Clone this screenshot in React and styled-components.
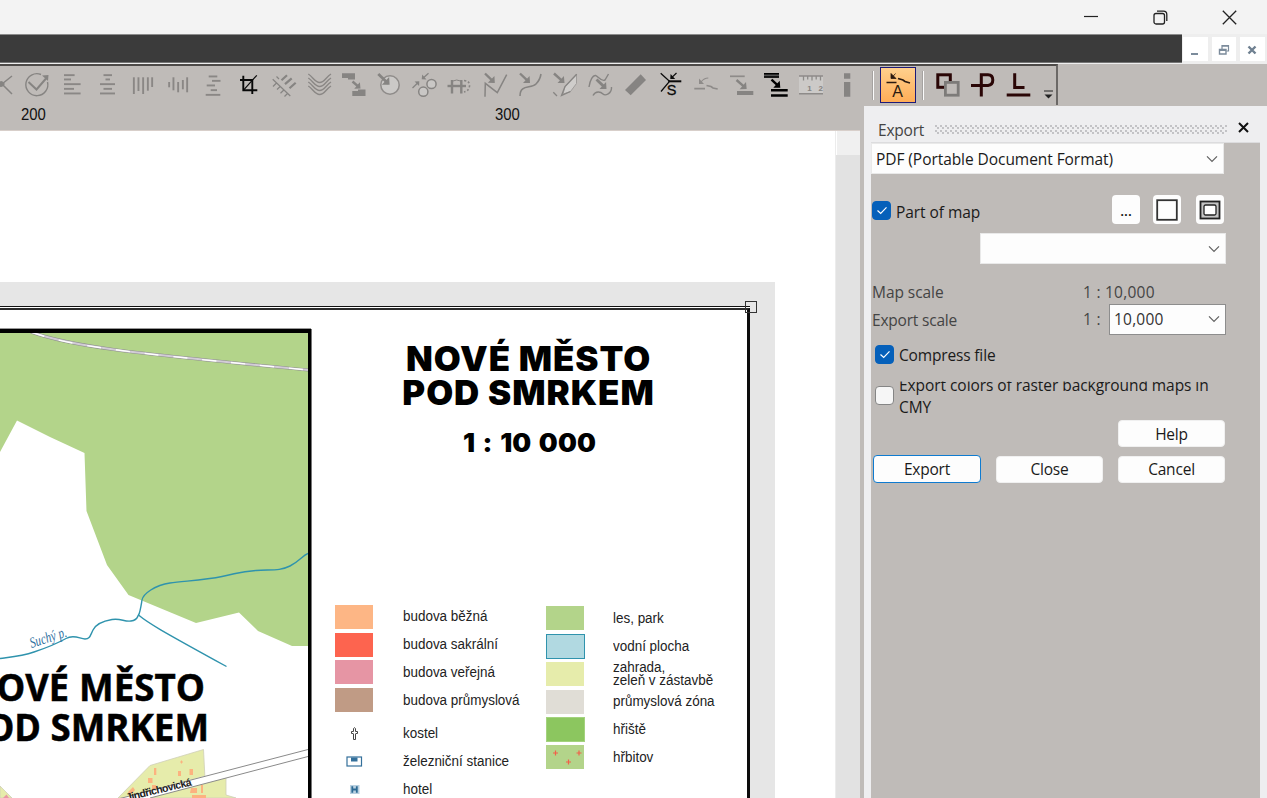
import React from "react";
import styled, { createGlobalStyle, css } from "styled-components";

const GRAY = "#bfbbb8";
const LIGHT = "#eeeef0";
const DIM = "#868482";

const Global = createGlobalStyle`
  * { box-sizing: border-box; }
  body { margin: 0; overflow: hidden; font-family: "Open Sans", "Noto Sans", sans-serif; }
`;

const Window = styled.div`
  width: 1267px;
  height: 798px;
  display: flex;
  flex-direction: column;
  overflow: hidden;
  background: ${GRAY};
`;

/* ---------- title bar ---------- */
const TitleBar = styled.header`
  height: 34px;
  flex: none;
  display: flex;
  justify-content: flex-end;
  align-items: center;
  padding-right: 3.5px;
  background: #f3f3f3;
`;
const CaptionButton = styled.span`
  width: 69px;
  height: 34px;
  display: flex;
  align-items: center;
  justify-content: center;
`;

const MenuStrip = styled.div`
  height: 30px;
  flex: none;
  display: flex;
  background: #eeeeee;
`;
const MenuDark = styled.div`
  width: 1182px;
  height: 29px;
  border-top: 1px solid #8b8b8b;
  border-bottom: 1px solid #757575;
  background: #3b3b3b;
`;
const ChildButtons = styled.div`
  display: flex;
  gap: 4px;
  padding: 3px 0 0 1px;
`;
const ChildButton = styled.span`
  width: 24.5px;
  height: 24px;
  display: flex;
  align-items: center;
  justify-content: center;
  padding-top: 2px;
  background: #fff;
`;

/* ---------- toolbar ---------- */
const ToolBar = styled.div`
  width: 1058px;
  height: 41px;
  flex: none;
  display: flex;
  border-top: 2px solid #4d4a48;
  border-right: 2px solid #6b6866;
  overflow: hidden;
`;
const Tools = styled.div`
  width: 866px;
  flex: none;
  display: flex;
  margin-left: -15.6px;
  padding-top: 6px;
`;
const Tool = styled.span`
  width: 35.2px;
  flex: none;
  display: flex;
  justify-content: center;
`;
const EditTools = styled.div`
  display: flex;
  flex: none;
  padding-top: 6px;
`;
const Separator = styled.i`
  width: 2px;
  height: 29px;
  flex: none;
  margin: 5px ${(p) => p.$after}px 0 ${(p) => p.$before || 0}px;
  background: #fbfbfb;
  border-left: 1px solid #a5a2a0;
`;
const ActiveTool = styled.span`
  width: 36px;
  height: 36px;
  flex: none;
  margin-top: 1px;
  display: flex;
  align-items: center;
  justify-content: center;
  border: 1px solid #1d1a78;
  background: linear-gradient(#ffd08d, #ffad57);
`;
const Overflow = styled.span`
  display: flex;
  flex: none;
  align-items: flex-end;
  padding: 0 0 6px 9px;
`;

/* ---------- work area ---------- */
const Work = styled.div`
  flex: 1;
  min-height: 0;
  display: flex;
`;
const DocColumn = styled.div`
  width: 860px;
  flex: none;
  display: flex;
  flex-direction: column;
`;
const Ruler = styled.div`
  height: 26px;
  flex: none;
  display: flex;
  padding-left: 21px;
  font: 16px/19px "Liberation Sans", Arial, sans-serif;
  color: #111;
  border-bottom: 1px solid #d8cfca;
`;
const RulerMark = styled.span`
  width: ${(p) => p.$w}px;
  flex: none;
  transform: scaleX(0.93);
  transform-origin: left;
`;
const DocArea = styled.div`
  flex: 1;
  min-height: 0;
  display: flex;
  background: #fff;
`;
const Canvas = styled.div`
  width: 835px;
  height: 100%;
  padding-top: 151px;
  overflow: hidden;
`;
const ScrollBar = styled.div`
  width: 25px;
  background: #e2e2e2;
  border-left: 1px solid #ececec;
`;
const ScrollCap = styled.div`
  height: 24px;
  background: #f0f0f0;
  border-left: 1px solid #fff;
`;
const Margin = styled.div`
  position: relative;
  width: 775px;
  height: 520px;
  padding-top: 24px;
  background: #e6e6e6;
`;
const SheetFrame = styled.div`
  width: 750px;
  height: 500px;
  padding-top: 1px;
  border-top: 1px solid #111;
  background: #fff;
`;
const Sheet = styled.div`
  display: flex;
  height: 498px;
  border-top: 2px solid #2c2c2c;
  border-right: 3px solid #0c0c0c;
  background: #fff;
`;
const Handle = styled.i`
  position: absolute;
  left: 745px;
  top: 19px;
  width: 12px;
  height: 12px;
  border: 1px solid #333;
`;
const MapPane = styled.div`
  width: 311px;
  height: 480px;
  flex: none;
  margin: 19px 1px 0 0;
  border: solid #000;
  border-width: 4px 3px 0 0;
  box-shadow: 0 -1px 0 #999, 1px 0 0 #777;
`;
const InfoPane = styled.div`
  flex: 1;
  min-width: 0;
  display: flex;
  flex-direction: column;
  align-items: stretch;
`;
const SheetTitle = styled.h1`
  margin: 33px 0 0 -2px;
  font: 900 33.5px/33.5px "Inter", "Liberation Sans", sans-serif;
  letter-spacing: 0.9px;
  text-align: center;
  white-space: nowrap;
  transform: scaleX(1.04);
  color: #000;
`;
const TitleLine = styled.span`
  display: block;
`;
const SheetScale = styled.div`
  margin: 16px 0 0 0;
  font: 900 25.5px/33px "Inter", "Liberation Sans", sans-serif;
  letter-spacing: 0.1px;
  word-spacing: 2px;
  text-align: center;
  transform: scaleX(1.045);
  color: #000;
`;
const Legend = styled.div`
  display: flex;
  margin-top: 144px;
  padding-left: 23px;
`;
const LegendColumn = styled.div`
  width: 210.5px;
  flex: none;
  padding-top: ${(p) => p.$top || 0}px;
`;
const LegendRow = styled.div`
  display: flex;
  align-items: center;
  height: ${(p) => p.$h || 27.8}px;
  margin-top: ${(p) => p.$gap || 0}px;
`;
const Swatch = styled.span`
  width: 38px;
  height: 24px;
  flex: none;
  margin-right: 29.6px;
  display: flex;
  align-items: center;
  justify-content: center;
  background: ${(p) => p.$color || "transparent"};
  ${(p) =>
    p.$line &&
    css`
      border: 1px solid ${p.$line};
      width: 39px;
      height: 25px;
      margin-right: 28.6px;
    `}
`;
const LegendText = styled.span`
  font: 14px/13px "Liberation Sans", Arial, sans-serif;
  white-space: pre;
  color: #222;
  transform: scaleX(0.96);
  transform-origin: left;
`;

/* ---------- export panel ---------- */
const Dock = styled.aside`
  flex: 1;
  margin-left: 4px;
  margin-top: 1px;
  padding: 0 7px;
  display: flex;
  flex-direction: column;
  background: ${LIGHT};
`;
const DockHeader = styled.div`
  height: 37px;
  flex: none;
  display: flex;
  align-items: center;
  padding: 11px 11px 0 7px;
  border-bottom: 1px solid #dcdcde;
  color: #444;
`;
const Grip = styled.span`
  width: 292px;
  height: 9px;
  margin: -1px 11px 0 11px;
  background-image: radial-gradient(circle at 1px 1px, #b4b4b7 0.6px, transparent 1px),
    radial-gradient(circle at 3px 3px, #b4b4b7 0.6px, transparent 1px);
  background-size: 5px 5px;
`;
const Text = styled.span`
  font-size: 15.5px;
  line-height: 22px;
  letter-spacing: ${(p) => (p.$ls === undefined ? -0.06 : p.$ls)}px;
  white-space: nowrap;
  color: ${(p) => p.$color || "#1a1a1a"};
`;
const DockBody = styled.div`
  flex: 1;
  display: flex;
  flex-direction: column;
  background: ${GRAY};
`;
const Combo = styled.div`
  width: ${(p) => p.$w}px;
  height: ${(p) => p.$h || 30}px;
  margin-left: ${(p) => p.$x || 0}px;
  flex: none;
  display: flex;
  align-items: center;
  justify-content: space-between;
  padding: ${(p) => p.$pt || 0}px 5px 0 4px;
  background: #fdfdfd;
  border: 1px solid ${(p) => p.$line || "#e9e9e9"};
`;
const Row = styled.div`
  height: ${(p) => p.$h}px;
  margin-top: ${(p) => p.$gap || 0}px;
  padding-left: ${(p) => p.$x || 0}px;
  flex: none;
  display: flex;
  align-items: center;
`;
const Check = styled.span`
  width: 19px;
  height: 19px;
  flex: none;
  margin: 0 5px ${(p) => p.$lift || 0}px 0;
  display: flex;
  align-items: center;
  justify-content: center;
  border-radius: 4px;
  background: ${(p) => (p.$on ? "#0560ba" : "#f6f6f6")};
  border: 1px solid ${(p) => (p.$on ? "#0560ba" : "#858585")};
`;
const SmallButton = styled.span`
  width: 28px;
  height: 29px;
  margin-left: ${(p) => p.$x}px;
  display: flex;
  align-items: center;
  justify-content: center;
  border-radius: 4px;
  background: #fdfdfd;
`;
const Dots = styled.span`
  font-size: 14px;
  font-weight: 600;
  padding-top: 2px;
  color: #111;
`;
const Cell = styled.span`
  width: ${(p) => p.$w}px;
  flex: none;
  display: flex;
  align-items: center;
  padding-top: ${(p) => p.$pt || 0}px;
`;
const Clipped = styled.div`
  height: 38px;
  overflow: hidden;
  clip-path: inset(1.5px 0 0 0);
  display: flex;
  flex-direction: column;
  justify-content: flex-end;
`;
const Button = styled.button`
  width: ${(p) => (p.$primary ? 108 : 107)}px;
  height: ${(p) => (p.$primary ? 28 : 27)}px;
  margin: 0 0 0 ${(p) => p.$x}px;
  padding: 0;
  flex: none;
  font: inherit;
  border-radius: 4px;
  background: #fdfdfd;
  border: 1px solid ${(p) => (p.$primary ? "#0f7bd0" : "#f0f0f0")};
`;

/* ---------- toolbar drawings ---------- */
const Arrow = ({ x1, y1, x2, y2, c = DIM, w = 2.4, s = 5 }) => {
  const a = Math.atan2(y2 - y1, x2 - x1);
  const pt = (t, r) => `${x2 + r * Math.cos(a + t)},${y2 + r * Math.sin(a + t)}`;
  return (
    <g>
      <line x1={x1} y1={y1} x2={x2 - Math.cos(a) * 2} y2={y2 - Math.sin(a) * 2} stroke={c} strokeWidth={w} />
      <polygon points={`${x2},${y2} ${pt(Math.PI - 0.75, s * 1.4)} ${pt(Math.PI + 0.75, s * 1.4)}`} fill={c} stroke="none" />
    </g>
  );
};
const HBars = ({ rows }) =>
  rows.map(([a, b, y], i) => <rect key={i} x={a} width={b - a} y={y - 0.8} height="1.9" fill="#8a8785" />);
const VBars = ({ cols }) =>
  cols.map(([x, a, b], i) => <rect key={i} x={x - 0.8} width="1.9" y={a} height={b - a} fill="#8a8785" />);

const toolIcons = [
  <g stroke={DIM} fill="none">
    <path d="M23 4L13 12L23 22M4 4L13 12L4 22" strokeWidth="1.5" />
    <path d="M6 11L13 9L16 12L13 15L6 13z" fill={DIM} stroke="none" />
  </g>,
  <g stroke={DIM} fill="none">
    <path d="M17 2.5A11 11 0 1 0 23.5 10" strokeWidth="1.4" />
    <path d="M4.5 10L12.5 17.5L22 6.5" strokeWidth="2" />
    <path d="M18 3.5L24.5 3L24 9z" fill={DIM} stroke="none" />
  </g>,
  <HBars rows={[[5, 15.6, 3], [5, 12, 7.3], [5, 21.6, 12], [5, 15, 16.7], [5, 21.6, 21.3]]} />,
  <HBars rows={[[8.5, 17, 3], [10.5, 15, 7.3], [5, 20, 12], [8.5, 17, 16.7], [5, 20, 21.3]]} />,
  <VBars cols={[[3.7, 5.3, 22], [8.3, 5.3, 19], [13, 5.3, 22], [17.7, 5.3, 18.7], [22, 5.3, 15]]} />,
  <VBars cols={[[4, 10, 15.3], [8.3, 5.3, 18.3], [13, 10, 20.3], [17.7, 8, 17.3], [22, 5.3, 20.3]]} />,
  <HBars rows={[[8.7, 17.3, 4.3], [12, 20.5, 8.7], [6.7, 15, 13.3], [10.7, 17, 18], [5.7, 20.3, 22.7]]} />,
  <g stroke="#080808" fill="none" strokeWidth="1.9">
    <path d="M8.3 3.7V18.3H22.3M5 8H17.3V22" />
    <path d="M21.8 3.3L8.3 18.3" strokeWidth="1.2" />
  </g>,
  <g stroke={DIM} fill="none">
    <path d="M10.5 8.2L16 3.3M14 12.2L20.7 6.3M18.5 16.2L24.7 10.7" strokeWidth="2.2" />
    <path d="M1.7 7.3L19.3 24M5.5 11L2 14.5M9.2 14.5L6 17.5M12.8 18L9.5 21.2M16.5 21.5L13.5 24.5M5.5 4.500L8 7" strokeWidth="1.2" />
  </g>,
  <g stroke="#8a8785" fill="none" strokeWidth="1.4">
    {[2, 6, 10, 14].map((y) => (
      <path key={y} d={`M2.3 ${y}C7 ${y + 3} 9 ${y + 8.5} 13.6 ${y + 8.5}S20 ${y + 3} 25 ${y}`} />
    ))}
  </g>,
  <g fill={DIM}>
    <path d="M1 1.3H14V7.5H7V6H1zM11.3 24V19H17V17.5H24.5V24z" />
    <Arrow x1={11.5} y1={9.5} x2={19.5} y2={16.5} s={4.5} />
  </g>,
  <g>
    <circle cx="14" cy="13" r="9.2" fill="#cbc9c7" stroke="#8f8c8a" strokeWidth="1.5" />
    <Arrow x1={2.3} y1={2} x2={13.6} y2={12.8} w={2.8} s={5.5} />
  </g>,
  <g>
    <circle cx="12.3" cy="19.7" r="4.6" fill="#c9c7c5" stroke={DIM} strokeWidth="1.5" />
    <circle cx="20.5" cy="12" r="4.6" fill="#c9c7c5" stroke={DIM} strokeWidth="1.5" />
    <Arrow x1={17.5} y1={1.3} x2={10.7} y2={7.3} w={1.3} s={3.4} />
    <Arrow x1={1.5} y1={16} x2={8.3} y2={9.3} w={1.3} s={3.4} />
  </g>,
  <g stroke={DIM} fill="none">
    <path d="M1.500 14H20" strokeWidth="2.400" />
    <path d="M6 8V21.500M15.300 8V21.500" strokeWidth="2.400" />
    <path d="M7 9L10.700 8L14.500 9" strokeWidth="1" />
    <path d="M18 8.500Q24 9 23.500 14T18 20" strokeWidth="1.600" strokeDasharray="2 2" />
  </g>,
  <g stroke={DIM} fill="none">
    <path d="M3 24.700L3.300 11.300L15.300 20.700L24.700 2.700" strokeWidth="1.500" />
    <Arrow x1={3} y1={1.500} x2={12.800} y2={11} />
  </g>,
  <g stroke={DIM} fill="none">
    <path d="M3 24C3 12 14 17 19 12Q23 8 24 2" strokeWidth="1.600" />
    <Arrow x1={3} y1={1.500} x2={13} y2={11} />
  </g>,
  <g stroke={DIM} fill="none">
    <path d="M24.500 2L13 14.500L11 22L18.500 19.500L24.500 11.500z" fill="#cfcdcb" stroke="#a09d9b" />
    <path d="M24.700 2.200L13 14.500L9.500 23.500L18.500 19.500M1.300 20.300L5 24" strokeWidth="1.300" />
    <Arrow x1={2} y1={1.500} x2={12.500} y2={11} />
  </g>,
  <g stroke={DIM} fill="none" strokeWidth="1.400">
    <path d="M2 15C3 8 6 3 8.500 3.500S14 10 18 8L21.500 2M6 23.500C9 18 14 20 16 22S25 22 24.500 15" />
    <Arrow x1={9.500} y1={7.500} x2={19.500} y2={17} w={2.800} />
  </g>,
  <path d="M3 18L18.700 2.300L24 8L8.700 23.300z" fill={DIM} />,
  <g stroke="#0b0b0b" fill="none">
    <path d="M2.700 1.300L11.500 9.300L3 19.500" strokeWidth="1.300" />
    <path d="M10.300 9.300H23.300" strokeWidth="2" />
    <Arrow x1={18.500} y1={1} x2={12.300} y2={7} c="#0b0b0b" w={1.200} s={3.500} />
    <text x="13.700" y="23.200" fontSize="14.500" fontFamily="Liberation Sans, sans-serif" textAnchor="middle" fill="#0b0b0b" strokeWidth="0.300">S</text>
  </g>,
  <g stroke="#8e8b89" fill="none">
    <path d="M1.300 16.700H12M13.500 13.500L18 14.500L20 16L24.700 17" strokeWidth="1.700" />
    <path d="M15.300 6Q11 6 8 10" strokeWidth="1.200" />
    <path d="M6 6.500V12H11z" fill="#8e8b89" stroke="none" />
  </g>,
  <g>
    <path d="M2 4.300H16.700" stroke="#8e8b89" strokeWidth="1.700" />
    <rect x="9" y="19" width="16.300" height="4" fill={DIM} />
    <Arrow x1={8.500} y1={8} x2={18.700} y2={17} />
  </g>,
  <g>
    <rect x="1" y="1" width="15" height="4.700" fill="#555" />
    <path d="M1 1.700H16M1 5H16" stroke="#000" strokeWidth="1.500" />
    <path d="M8 18.300H24.700M8 23.600H24.700" stroke="#000" strokeWidth="2.500" />
    <Arrow x1={8.500} y1={7.700} x2={17.300} y2={15.700} c="#000" />
  </g>,
  <g>
    <rect x="1" y="4" width="24" height="17.500" fill="#cccac8" />
    <path d="M1 4H25M1 21.700H25" stroke="#8e8b89" strokeWidth="1.500" />
    <path d="M5.500 4V8.500M9.700 4V7.500M14 4V8.500M18.200 4V7.500M22.500 4V8.500" stroke="#8e8b89" strokeWidth="1.300" />
    <text x="9.300" y="18.800" fontSize="8" fontWeight="700" fontFamily="Liberation Sans, sans-serif" fill={DIM}>1</text>
    <text x="20.500" y="18.800" fontSize="8" fontWeight="700" fontFamily="Liberation Sans, sans-serif" fill={DIM}>2</text>
  </g>,
  <path d="M10 1.300H16.300V6.700H10zM10 10H16.300V24.700H10z" fill={DIM} />,
];

const Icon = ({ size = 26, children }) => (
  <svg width={size} height={size} viewBox={`0 0 ${size} ${size}`} style={{ overflow: "visible" }}>
    {children}
  </svg>
);
const Chevron = () => (
  <svg width="12" height="8" viewBox="0 0 12 8">
    <path d="M1 1.300L6 6.300L11 1.300" fill="none" stroke="#606060" strokeWidth="1.200" />
  </svg>
);
const Tick = () => (
  <svg width="12" height="9" viewBox="0 0 12 9">
    <path d="M1.500 4.500L4.700 7.500L10.500 1.300" fill="none" stroke="#fff" strokeWidth="1.200" />
  </svg>
);

/* ---------- map drawing ---------- */
const water = "#2f93ad";
const TownMap = () => (
  <svg width="308" height="465" viewBox="0 333 308 465" style={{ display: "block" }}>
    <path
      fill="#b3d48a"
      d="M0 333H308V646H292L258 631L239 612.500L196 623L128.500 595L107 565L86.500 511L84.500 453L50 437L17 420.500L0 452z"
    />
    <path d="M31 332C70 346 120 352 308 370" fill="none" stroke="#8f8f8f" strokeWidth="3.200" />
    <path d="M31 332C70 346 120 352 308 370" fill="none" stroke="#d2ccd6" strokeWidth="2" />
    <path d="M31 332C70 346 120 352 308 370" fill="none" stroke="#fff" strokeWidth="1.400" strokeDasharray="14 15" />
    <g fill="none" stroke={water} strokeWidth="1.400">
      <path d="M0 658.500C15 656.500 22 656 34 652S58 643 66 638.500S80 639 85 639S90 636 93 630S103 621 112 619.500S124 622 131 621S137 617 138.500 615S141 606 142 600S155 585 170 583S205 580 222 576.500S240 571.500 256 570.500S280 571 290 566S302 556 308 553.500" />
      <path d="M138.500 615C148 623 160 630 226.500 666.500" />
    </g>
    <text transform="translate(31.500 648) rotate(-18)" fontFamily="Liberation Serif, serif" fontStyle="italic" fontSize="15" fill="#2e6f9e" textLength="38" lengthAdjust="spacingAndGlyphs">
      Suchý p.
    </text>
    <g fontFamily="Open Sans, Noto Sans, sans-serif" fontWeight="700" fontSize="37.500" fill="#000" stroke="#000" strokeWidth="0.500">
      <text x="-33" y="700.500" textLength="102" lengthAdjust="spacingAndGlyphs">NOVÉ</text>
      <text x="79" y="700.500" textLength="126" lengthAdjust="spacingAndGlyphs">MĚSTO</text>
      <text x="-37" y="740.500" textLength="78" lengthAdjust="spacingAndGlyphs">POD</text>
      <text x="50.500" y="740.500" textLength="158.500" lengthAdjust="spacingAndGlyphs">SMRKEM</text>
    </g>
    <path d="M118 798L150 765.500L203.500 749.500L205 779L226 778V795L236 798zM0 786L12 798H0z" fill="#e6ecab" stroke="#cfcfb8" strokeWidth="0.800" />
    <g fill="#fcb27f">
      <path d="M154 768h2.300v7h-2.300zM148 778h4.500v5h-4.500zM178 771h3v5h-3zM189.500 769h3.500v6h-3.500zM152 785h4v4h-4zM128 792l5-5l2 3l-5 6z" />
      <path d="M180 762h3M181.500 760.500v3" stroke="#fcb27f" />
      <path d="M3 798l3.500-3.500l2.500 3.500z" fill="#e797a4" />
    </g>
    <path d="M120 798.500L308 748.500L308 756.500L205 783.500L150 798z" fill="#fff" />
    <path d="M120 798.500L308 749.500M150 798L308 756.500" fill="none" stroke="#8a8a8a" strokeWidth="1" />
    <path d="M191 788h6v5h-7zM201 785h2v8h-2zM192 795h14v4h-14z" fill="#fcb27f" />
    <text transform="translate(127 801) rotate(-13.500)" fontFamily="Liberation Sans, sans-serif" fontWeight="700" fontSize="10.500" textLength="67" fill="#222">
      Jindřichovická
    </text>
  </svg>
);

const leftLegend = [
  { t: "budova běžná", c: "#fdb685" },
  { t: "budova sakrální", c: "#fd644f" },
  { t: "budova veřejná", c: "#e695a4" },
  { t: "budova průmyslová", c: "#c09b85" },
];
const rightLegend = [
  { t: "les, park", c: "#b3d48a" },
  { t: "vodní plocha", c: "#b1d9e1", line: "#2f93ad" },
  { t: "zahrada,\nzeleň v zástavbě", c: "#e6ecab" },
  { t: "průmyslová zóna", c: "#e0ddd6" },
  { t: "hřiště", c: "#8cc65f", line: "#a4d27e" },
];
const symbols = {
  church: <path d="M10.500 7V12.500H8.500V7M8.500 6.500H6.500V4.500H8.500V1.500L9.500 .7L10.500 1.500V4.500H12.500V6.500H10.500" fill="none" stroke="#444" strokeWidth="1" />,
  station: (
    <g>
      <rect x="2" y="2" width="14.500" height="9" fill="#fff" stroke="#34709b" strokeWidth="1.200" />
      <rect x="6" y="2.500" width="6.500" height="4" fill="#34709b" />
    </g>
  ),
  hotel: (
    <g>
      <rect x="5" y="2" width="9.500" height="9" fill="#b9d0e0" />
      <path d="M7.300 3.200V9.800M11.800 3.200V9.800M7.300 6.500H11.800" stroke="#2b6993" strokeWidth="1.800" />
    </g>
  ),
};

export default function App() {
  return (
    <Window>
      <Global />
      <TitleBar>
        <CaptionButton>
          <svg width="14" height="14"><path d="M0 6.500H14" stroke="#222" strokeWidth="1.200" /></svg>
        </CaptionButton>
        <CaptionButton>
          <svg width="15" height="15" viewBox="0 0 15 15" fill="none" stroke="#222" strokeWidth="1.300">
            <rect x="1" y="3.500" width="10.500" height="10.500" rx="2" />
            <path d="M4 1.200H10.500Q13.800 1.200 13.800 4.500V11" />
          </svg>
        </CaptionButton>
        <CaptionButton>
          <svg width="15" height="15"><path d="M.8 .8L14.200 14.200M14.200 .8L.8 14.200" stroke="#222" strokeWidth="1.300" /></svg>
        </CaptionButton>
      </TitleBar>
      <MenuStrip>
        <MenuDark />
        <ChildButtons>
          <ChildButton>
            <svg width="10" height="12"><path d="M1 10H8" stroke="#7b8b9b" strokeWidth="2" /></svg>
          </ChildButton>
          <ChildButton>
            <svg width="12" height="12" viewBox="0 0 12 12" fill="none" stroke="#7b8b9b">
              <path d="M4 5V1.500H10.500V7H8.500M4 2.200H10.500" strokeWidth="1.200" />
              <path d="M1.500 5.500H8V10H1.500zM1.500 6.300H8" strokeWidth="1.400" />
            </svg>
          </ChildButton>
          <ChildButton>
            <svg width="10" height="10"><path d="M1.500 1.500L8.500 8.500M8.500 1.500L1.500 8.500" stroke="#6f8091" strokeWidth="2.400" /></svg>
          </ChildButton>
        </ChildButtons>
      </MenuStrip>

      <ToolBar>
        <Tools>
          {toolIcons.map((icon, i) => (
            <Tool key={i}>
              <Icon>{icon}</Icon>
            </Tool>
          ))}
        </Tools>
        <Separator $before={22} $after={6} />
        <ActiveTool>
          <Icon>
            <path d="M1.500 10.500H11.500M13 6.500L18 8L20 9.500L25 11" stroke="#2b1a10" strokeWidth="1.700" fill="none" />
            <path d="M6 1.500V6.500H11zM6.500 6L10.500 1.500" stroke="#2b1a10" fill="#2b1a10" strokeWidth="0.800" />
            <text x="12.500" y="24.500" textAnchor="middle" fontFamily="Liberation Sans, sans-serif" fontSize="16" fill="#2b1a10">A</text>
          </Icon>
        </ActiveTool>
        <Separator $before={6} $after={5.5} />
        <EditTools>
          <Tool>
            <Icon>
              <rect x="2.800" y="2.800" width="12.500" height="12.500" fill="none" stroke="#2a0606" strokeWidth="3" />
              <rect x="10.400" y="10.400" width="12.800" height="12.800" fill={GRAY} stroke="#7d7b79" strokeWidth="2.800" />
            </Icon>
          </Tool>
          <Tool>
            <Icon>
              <path d="M11.300 24.500V2.800H18Q22.800 3 22.800 8T18 13.500H1" fill="none" stroke="#2a0606" strokeWidth="3" />
            </Icon>
          </Tool>
          <Tool>
            <Icon>
              <path d="M9.700 1.300V15.500H19.500" fill="none" stroke="#2a0606" strokeWidth="3" />
              <path d="M1.700 23H25.300" stroke="#2a0606" strokeWidth="3" />
            </Icon>
          </Tool>
        </EditTools>
        <Overflow>
          <svg width="9" height="9"><path d="M0 1H9" stroke="#222" /><path d="M.5 4.500H8.500L4.500 8.500z" fill="#222" /></svg>
        </Overflow>
      </ToolBar>

      <Work>
        <DocColumn>
          <Ruler>
            <RulerMark $w={474}>200</RulerMark>
            <RulerMark $w={40}>300</RulerMark>
          </Ruler>
          <DocArea>
            <Canvas>
              <Margin>
                <SheetFrame>
                  <Sheet>
                    <MapPane>
                      <TownMap />
                    </MapPane>
                    <InfoPane>
                      <SheetTitle>
                        <TitleLine>NOVÉ MĚSTO</TitleLine>
                        <TitleLine>POD SMRKEM</TitleLine>
                      </SheetTitle>
                      <SheetScale>1 : 10 000</SheetScale>
                      <Legend>
                        <LegendColumn>
                          {leftLegend.map((r) => (
                            <LegendRow key={r.t}>
                              <Swatch $color={r.c} />
                              <LegendText>{r.t}</LegendText>
                            </LegendRow>
                          ))}
                          {[["kostel", "church", 5], ["železniční stanice", "station", 0], ["hotel", "hotel", 0]].map(([t, s, gap]) => (
                            <LegendRow key={t} $gap={gap} $h={28.2}>
                              <Swatch>
                                <svg width="19" height="13">{symbols[s]}</svg>
                              </Swatch>
                              <LegendText>{t}</LegendText>
                            </LegendRow>
                          ))}
                        </LegendColumn>
                        <LegendColumn $top={1.5}>
                          {rightLegend.map((r) => (
                            <LegendRow key={r.t}>
                              <Swatch $color={r.c} $line={r.line} />
                              <LegendText>{r.t}</LegendText>
                            </LegendRow>
                          ))}
                          <LegendRow>
                            <Swatch $color="#b3d48a">
                              <svg width="38" height="24">
                                <path d="M9.500 5.500V10.500M7 8H12M33 5.500V10.500M30.500 8H35.500M22.500 14.500V19.500M20 17H25" stroke="#f2604a" strokeWidth="1.200" />
                              </svg>
                            </Swatch>
                            <LegendText>hřbitov</LegendText>
                          </LegendRow>
                        </LegendColumn>
                      </Legend>
                    </InfoPane>
                  </Sheet>
                </SheetFrame>
                <Handle />
              </Margin>
            </Canvas>
            <ScrollBar>
              <ScrollCap />
            </ScrollBar>
          </DocArea>
        </DocColumn>

        <Dock>
          <DockHeader>
            <Text $color="#444" $ls={-0.2}>Export</Text>
            <Grip />
            <svg width="11" height="11" style={{ marginTop: -5 }}><path d="M1 1L10 10M10 1L1 10" stroke="#111" strokeWidth="2" /></svg>
          </DockHeader>
          <DockBody>
            <Combo $w={353} $h={31} $pt={1}>
              <Text>PDF (Portable Document Format)</Text>
              <Chevron />
            </Combo>
            <Row $h={29} $gap={21} $x={1}>
              <Cell $w={240} $pt={4}>
                <Check $on $lift={2}><Tick /></Check>
                <Text>Part of map</Text>
              </Cell>
              <SmallButton $x={0}><Dots>...</Dots></SmallButton>
              <SmallButton $x={13}>
                <svg width="22" height="22"><rect x="1.200" y="1.200" width="19.600" height="19.600" fill="none" stroke="#333" strokeWidth="1.800" /></svg>
              </SmallButton>
              <SmallButton $x={15}>
                <svg width="22" height="20" fill="none" stroke="#222">
                  <rect x="1.500" y="1.500" width="19" height="17" fill="#c4c4c4" strokeWidth="1.800" />
                  <rect x="5" y="5" width="12" height="10" rx="1.500" fill="#fff" strokeWidth="1.300" />
                </svg>
              </SmallButton>
            </Row>
            <Row $h={31} $gap={9}>
              <Combo $w={246} $x={109} $h={31}>
                <span />
                <Chevron />
              </Combo>
            </Row>
            <Row $h={28} $gap={14} $x={1}>
              <Cell $w={211}><Text $color="#444">Map scale</Text></Cell>
              <Text $color="#444" $ls={0.25}>1 : 10,000</Text>
            </Row>
            <Row $h={32} $gap={-3} $x={1}>
              <Cell $w={211} $pt={2}><Text $color="#444" $ls={-0.2}>Export scale</Text></Cell>
              <Cell $w={26}><Text $color="#444" $ls={0.25}>1 :</Text></Cell>
              <Combo $w={117} $h={31} $line="#8d8d8d">
                <Text $color="#333" $ls={0.2}>10,000</Text>
                <Chevron />
              </Combo>
            </Row>
            <Row $h={22} $gap={9} $x={4}>
              <Check $on $lift={2}><Tick /></Check>
              <Text $ls={-0.16}>Compress file</Text>
            </Row>
            <Row $h={38} $gap={14} $x={4}>
              <Check $lift={8} />
              <Clipped>
                <Text>Export colors of raster background maps in</Text>
                <Text>CMY</Text>
              </Clipped>
            </Row>
            <Row $h={27} $gap={2}>
              <Button $x={247}><Text $ls={-0.2}>Help</Text></Button>
            </Row>
            <Row $h={28} $gap={8}>
              <Button $primary $x={2}><Text $ls={-0.2}>Export</Text></Button>
              <Button $x={15}><Text $ls={-0.2}>Close</Text></Button>
              <Button $x={15}><Text $ls={-0.2}>Cancel</Text></Button>
            </Row>
          </DockBody>
        </Dock>
      </Work>
    </Window>
  );
}
